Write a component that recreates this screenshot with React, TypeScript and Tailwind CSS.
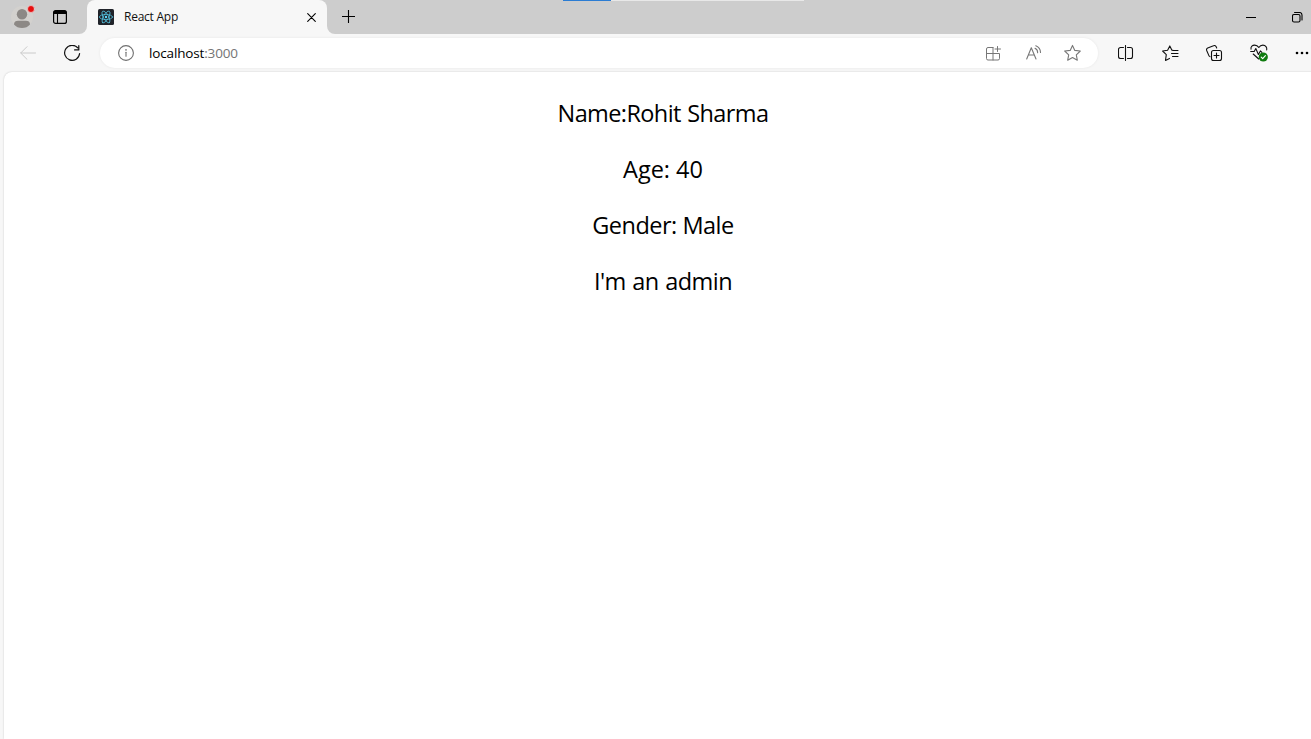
import type { ReactNode } from "react";

type IconProps = { w: number; h: number; className?: string; children: ReactNode };

function Icon({ w, h, className = "", children }: IconProps) {
  return (
    <svg
      width={w}
      height={h}
      viewBox={`0 0 ${w} ${h}`}
      fill="none"
      stroke="currentColor"
      strokeWidth="1.1"
      strokeLinecap="round"
      strokeLinejoin="round"
      className={`block shrink-0 ${className}`}
    >
      {children}
    </svg>
  );
}

function TabStrip() {
  return (
    <header className="flex h-[34px] w-full shrink-0 bg-[#f7f7f7]">
      <div className="flex w-[87px] shrink-0 items-start rounded-br-lg bg-[#cdcdcd]">
        <Icon w={26} h={30} className="ml-[11px]">
          <circle cx="11" cy="17" r="11" fill="#d3d1ce" stroke="none" />
          <circle cx="11" cy="14.2" r="5.2" fill="#8c8885" stroke="none" />
          <path d="M3 24.5c0-2.8 1.8-3.8 4-3.8h8c2.2 0 4 1 4 3.8-2 2.4-4.7 3.5-8 3.5s-6-1.1-8-3.5z" fill="#8c8885" stroke="none" />
          <circle cx="20" cy="9" r="3.5" fill="#e60f0f" stroke="#eedada" strokeWidth="0.7" />
        </Icon>
        <Icon w={14} h={14} className="mt-[10px] ml-[16px] text-black">
          <rect x="0.6" y="0.6" width="12.8" height="12.8" rx="2" strokeWidth="1.2" />
          <path d="M0.5 4V2.5a2 2 0 0 1 2-2h9a2 2 0 0 1 2 2V4z" fill="currentColor" stroke="none" />
          <path d="M4.5 4v9" />
        </Icon>
      </div>
      <div className="w-[240px] shrink-0 bg-[#cdcdcd]">
        <div className="flex h-full items-center rounded-t-lg bg-[#f7f7f7] pl-[11px]">
          <Icon w={16} h={16}>
            <rect width="16" height="16" rx="1.5" fill="#20232a" stroke="none" />
            <g stroke="#52bfdc" strokeWidth="0.8">
              <ellipse cx="8" cy="8" rx="6.6" ry="2.6" />
              <ellipse cx="8" cy="8" rx="6.6" ry="2.6" transform="rotate(60 8 8)" />
              <ellipse cx="8" cy="8" rx="6.6" ry="2.6" transform="rotate(120 8 8)" />
            </g>
            <circle cx="8" cy="8" r="1.2" fill="#61dafb" stroke="none" />
          </Icon>
          <span className="ml-[10px] flex-1 text-[12px] leading-4 tracking-[-0.25px] whitespace-nowrap text-[#111]">React App</span>
          <Icon w={9} h={9} className="mr-[11px] text-black">
            <path d="M0.7 0.7l7.6 7.6M8.3 0.7L0.7 8.3" />
          </Icon>
        </div>
      </div>
      <div className="flex min-w-0 flex-1 items-start rounded-bl-lg bg-[#cdcdcd]">
        <Icon w={14} h={14} className="mt-[10px] ml-[15px] text-black">
          <path d="M6.5 0v13M0 6.5h13" strokeLinecap="butt" />
        </Icon>
        <div className="ml-[207px] flex h-px w-[241px] shrink-0 bg-[#e8e8e8]">
          <div className="h-px w-12 bg-[#2b7cd3]" />
        </div>
        <Icon w={10} h={1} className="mt-[17px] ml-[442px] text-black">
          <path d="M0 0.5h10" strokeLinecap="butt" />
        </Icon>
        <Icon w={11} h={11} className="mt-[12px] ml-[36px] text-black">
          <rect x="0.5" y="2.5" width="7.5" height="7.5" rx="1.5" />
          <path d="M2.6 0.5H7.6a2.4 2.4 0 0 1 2.4 2.4v5" />
        </Icon>
      </div>
    </header>
  );
}

function Toolbar() {
  return (
    <nav className="flex h-[37px] w-[1318px] shrink-0 items-center bg-[#f7f7f7]">
      <Icon w={16} h={14} className="ml-[20px] text-[#cacaca]">
        <path d="M15.5 7H0.8M7 0.7L0.7 7L7 13.3" strokeWidth="1" />
      </Icon>
      <Icon w={17} h={17} className="mt-px ml-[28px] text-[#111]">
        <path d="M13.8 2.9A7.5 7.5 0 1 0 15.6 8.5M14.8 0.7v4.2h-4.2" strokeWidth="1.2" />
      </Icon>
      <div className="ml-[19px] flex h-[30px] w-[998px] shrink-0 items-center rounded-full bg-white shadow-[0_0_3px_rgba(0,0,0,0.07)]">
        <Icon w={16} h={16} className="ml-[18px] text-[#6f6f6f]">
          <circle cx="8" cy="8" r="7.4" />
          <path d="M8 7.3v3.9" />
          <circle cx="8" cy="4.9" r="0.8" fill="currentColor" stroke="none" />
        </Icon>
        <span className="ml-[15px] flex-1 text-[13.5px] leading-5 tracking-[-0.15px] text-black">
          localhost<span className="text-[#757575]">:3000</span>
        </span>
        <Icon w={15} h={15} className="mt-px mr-[25px] text-[#777]">
          <path d="M7 1.5H2A1.5 1.5 0 0 0 0.5 3v9.5a1.5 1.5 0 0 0 1.5 1.5h10a1.5 1.5 0 0 0 1.5-1.5V7.5H0.5M7 1.5v12.5M11.5 0.5v5M9 3h5.5" strokeWidth="1" />
        </Icon>
        <Icon w={16} h={16} className="mr-[22px] text-[#777]">
          <path d="M0.7 14L5.3 2.8L10 14M2.5 10h5.8M9 3.3a4.6 4.6 0 0 1 2.6 4.4M9.8 0.7a7.4 7.4 0 0 1 4.7 6.7" strokeWidth="1.1" />
        </Icon>
        <Icon w={17} h={17} className="mr-[17px] text-[#777]">
          <path d="M8.5 1.4l2.3 5 5.5 0.6-4 3.8 1 5.4-4.8-2.6-4.8 2.6 1-5.4-4-3.8 5.5-0.6z" strokeWidth="1.1" />
        </Icon>
      </div>
      <Icon w={16} h={16} className="ml-[20px] text-[#111]">
        <path d="M5.5 2.5H2.5A2 2 0 0 0 0.5 4.5v7a2 2 0 0 0 2 2h3M9.5 2.5h3a2 2 0 0 1 2 2v7a2 2 0 0 1-2 2H9.5M7.5 0.5v15" />
      </Icon>
      <Icon w={17} h={17} className="mt-px ml-[28px] text-[#111]">
        <path d="M11.5 5.5L9.8 5.1 7.8 0.9 5.6 5.2 0.6 6l3.7 3.6-0.8 5.8 4-2M10.5 5.5h5.5M9.5 8.5h6.5M10.5 11.5h5.5" />
      </Icon>
      <Icon w={18} h={17} className="mt-px ml-[27px] text-[#111]">
        <path d="M4 11.6L3 10.9 0.7 5.5a2 2 0 0 1 1-2.5L7.5 0.8a2 2 0 0 1 2.6 0.8l0.6 1.4" />
        <rect x="5.5" y="5.5" width="10" height="10" rx="2" />
        <path d="M10.5 8v5M8 10.5h5" />
      </Icon>
      <Icon w={20} h={18} className="mt-px ml-[26px] text-[#111]">
        <path d="M1 5.2C0.6 2.5 2.5 1.1 4.7 1.1c1.9 0 3.2 1 4.1 2.4 0.9-1.4 2.2-2.4 4.1-2.4 2.7 0 4.3 2.3 3.8 4.8M0.7 7.5h3.5l1.6-3 2.6 6 2-3.6 1.5 1.5M3.2 10l5.5 5" />
        <circle cx="13.3" cy="13" r="4.6" fill="#0f7b0f" stroke="none" />
        <path d="M11.2 13.1l1.5 1.5 2.7-2.9" stroke="white" />
      </Icon>
      <Icon w={14} h={4} className="ml-[25px] text-black">
        <g fill="currentColor" stroke="none">
          <circle cx="2" cy="2" r="1.3" />
          <circle cx="7" cy="2" r="1.3" />
          <circle cx="12" cy="2" r="1.3" />
        </g>
      </Icon>
    </nav>
  );
}

function Profile() {
  return (
    <main className="flex w-[1318px] shrink-0 flex-col items-center gap-6 rounded-tl-lg bg-white pt-[25px] text-[23.5px] leading-8 whitespace-nowrap text-black shadow-[0_0_2px_rgba(0,0,0,0.2)]">
      <p className="tracking-[-0.6px] [word-spacing:1px]">Name:Rohit Sharma</p>
      <p>Age: 40</p>
      <p className="tracking-[-0.5px]">Gender: Male</p>
      <p className="tracking-[-0.54px] [word-spacing:1px]">I'm an admin</p>
    </main>
  );
}

export default function App() {
  return (
    <div className="flex h-screen w-full flex-col overflow-hidden bg-[#f7f7f7] font-['Open_Sans','Noto_Sans',sans-serif]">
      <TabStrip />
      <Toolbar />
      <div className="flex min-h-0 flex-1 pt-px pl-1">
        <Profile />
      </div>
    </div>
  );
}
